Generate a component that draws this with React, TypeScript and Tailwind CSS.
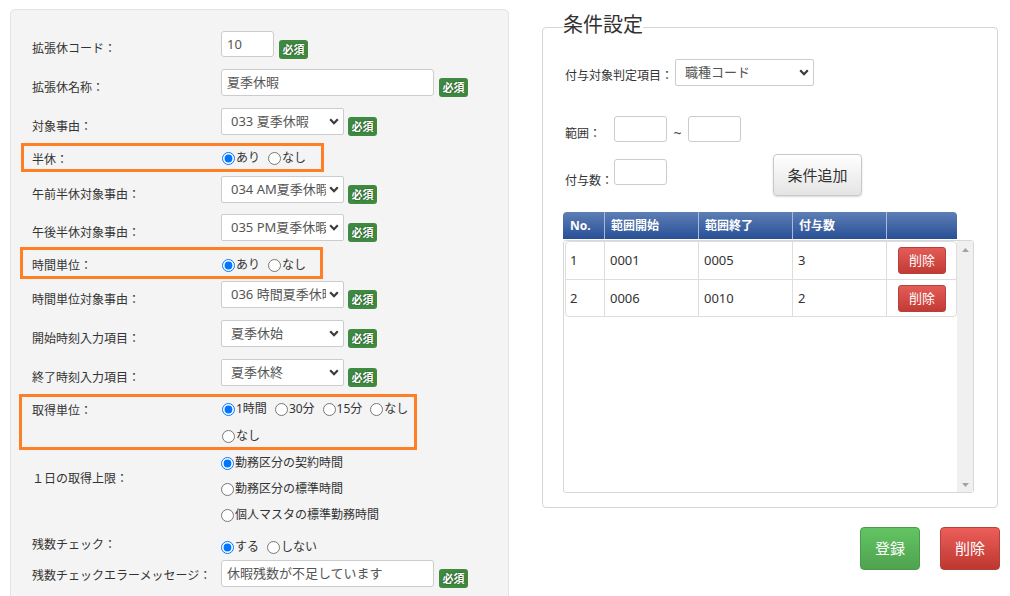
import React from "react";

const Chevron = () => (
  <svg width="10" height="7" viewBox="0 0 10 7" className="shrink-0">
    <path d="M1.2 1.3 L5 5.2 L8.8 1.3" stroke="#3a3a3a" strokeWidth="2.2" fill="none" />
  </svg>
);

const Badge = ({ cls }: { cls: string }) => (
  <div
    className={`${cls} w-[29px] h-[19px] shrink-0 rounded-[3px] bg-[#3f8a40] text-white text-[11px] font-bold leading-[19px] text-center [text-shadow:0_0_2px_#173d17]`}
  >
    必須
  </div>
);

const Select = ({ text, cls }: { text: string; cls: string }) => (
  <div
    className={`${cls} h-[27px] shrink-0 bg-white border border-[#cccccc] rounded-[2px] flex items-center pl-[9px] pr-[4px] text-[13px] text-[#555]`}
  >
    <span className="flex-1 mr-[3px] overflow-hidden whitespace-nowrap leading-[25px]">{text}</span>
    <Chevron />
  </div>
);

const TextInput = ({ value, cls }: { value?: string; cls: string }) => (
  <div
    className={`${cls} shrink-0 bg-white border border-[#cccccc] rounded-[3px] pl-[5px] text-[13px] text-[#555] leading-[24px] whitespace-nowrap overflow-hidden`}
  >
    {value}
  </div>
);

const Radio = ({ checked, label }: { checked?: boolean; label: string }) => (
  <label className="flex items-center text-[12px] text-[#333] leading-[18px] whitespace-nowrap">
    <input type="radio" checked={!!checked} readOnly className="m-0 w-[13px] h-[13px]" />
    <span className="ml-[1px]">{label}</span>
  </label>
);

const Label = ({ text, cls }: { text: string; cls: string }) => (
  <div className={`${cls} shrink-0 text-[12px] leading-[20px] text-[#333] whitespace-nowrap`}>{text}</div>
);

const SelectRow = ({ label, text, h }: { label: string; text: string; h: string }) => (
  <div className={`flex ml-[21px] ${h}`}>
    <Label text={label} cls="w-[189px] mt-[9px]" />
    <Select text={text} cls="w-[123px]" />
    <Badge cls="mt-[9px] ml-[4px]" />
  </div>
);

const DeleteSmall = () => (
  <div className="ml-[11px] mt-[5px] w-[48px] h-[27px] rounded-[3px] border border-[#b8403a] bg-linear-to-b from-[#e45c57] to-[#c23a34] text-white text-[13px] leading-[25px] text-center">
    削除
  </div>
);

const BodyRow = ({ no, a, b, c, first }: { no: string; a: string; b: string; c: string; first?: boolean }) => (
  <div className={`flex h-[37px] text-[13px] text-[#333] ${first ? "" : "border-t border-[#dddddd]"}`}>
    <div className="w-[39px] border-r border-[#dddddd] pl-[4px] leading-[36px]">{no}</div>
    <div className="w-[94px] border-r border-[#dddddd] pl-[5px] leading-[36px]">{a}</div>
    <div className="w-[94px] border-r border-[#dddddd] pl-[5px] leading-[36px]">{b}</div>
    <div className="w-[94px] border-r border-[#dddddd] pl-[5px] leading-[36px]">{c}</div>
    <div className="flex-1">
      <DeleteSmall />
    </div>
  </div>
);

export default function App() {
  return (
    <div className="w-[1010px] h-[596px] overflow-hidden bg-white flex items-start font-['Noto_Sans','Noto_Sans_CJK_JP',sans-serif]">
      {/* Left panel */}
      <div className="mt-[9px] ml-[10px] w-[499px] h-[600px] shrink-0 bg-[#f4f4f4] border border-[#e3e3e3] rounded-[5px] pt-[21px]">
        {/* R1 */}
        <div className="flex h-[38px] ml-[21px]">
          <Label text="拡張休コード：" cls="w-[189px] mt-[8px]" />
          <TextInput value="10" cls="w-[53px] h-[26px]" />
          <Badge cls="mt-[9px] ml-[5px]" />
        </div>
        {/* R2 */}
        <div className="flex h-[39px] ml-[21px]">
          <Label text="拡張休名称：" cls="w-[189px] mt-[9px]" />
          <TextInput value="夏季休暇" cls="w-[213px] h-[27px]" />
          <Badge cls="mt-[9px] ml-[5px]" />
        </div>
        <SelectRow label="対象事由：" text="033 夏季休暇" h="h-[35px]" />
        {/* R4 orange */}
        <div className="h-[33px]">
          <div className="ml-[10px] w-[303px] h-[29px] border-[3px] border-[#ff7f27] flex pl-[8px]">
            <Label text="半休：" cls="w-[190px] mt-[4px]" />
            <div className="flex gap-[8px] mt-[1px]">
              <Radio checked label="あり" />
              <Radio label="なし" />
            </div>
          </div>
        </div>
        <SelectRow label="午前半休対象事由：" text="034 AM夏季休暇" h="h-[38px]" />
        <SelectRow label="午後半休対象事由：" text="035 PM夏季休暇" h="h-[33px]" />
        {/* R7 orange */}
        <div className="h-[34px]">
          <div className="ml-[9px] w-[303px] h-[32px] border-[3px] border-[#ff7f27] flex pl-[9px]">
            <Label text="時間単位：" cls="w-[190px] mt-[6px]" />
            <div className="flex gap-[8px] mt-[4px]">
              <Radio checked label="あり" />
              <Radio label="なし" />
            </div>
          </div>
        </div>
        <SelectRow label="時間単位対象事由：" text="036 時間夏季休暇" h="h-[39px]" />
        <SelectRow label="開始時刻入力項目：" text="夏季休始" h="h-[39px]" />
        <SelectRow label="終了時刻入力項目：" text="夏季休終" h="h-[35px]" />
        {/* R11 orange */}
        <div className="h-[56px]">
          <div className="ml-[8px] w-[398px] h-[56px] border-[3px] border-[#ff7f27] flex pl-[10px]">
            <Label text="取得単位：" cls="w-[190px] mt-[4px]" />
            <div className="flex flex-col gap-[9px] mt-[3px]">
              <div className="flex gap-[8px]">
                <Radio checked label="1時間" />
                <Radio label="30分" />
                <Radio label="15分" />
                <Radio label="なし" />
              </div>
              <div className="flex">
                <Radio label="なし" />
              </div>
            </div>
          </div>
        </div>
        {/* R12 */}
        <div className="flex h-[80px] ml-[21px]">
          <Label text="１日の取得上限：" cls="w-[189px] mt-[19px]" />
          <div className="flex flex-col gap-[8px] mt-[4px]">
            <Radio checked label="勤務区分の契約時間" />
            <Radio label="勤務区分の標準時間" />
            <Radio label="個人マスタの標準勤務時間" />
          </div>
        </div>
        {/* R13 */}
        <div className="flex h-[30px] ml-[21px]">
          <Label text="残数チェック：" cls="w-[189px] mt-[5px]" />
          <div className="flex gap-[8px] mt-[4px]">
            <Radio checked label="する" />
            <Radio label="しない" />
          </div>
        </div>
        {/* R14 */}
        <div className="flex h-[38px] ml-[21px]">
          <Label text="残数チェックエラーメッセージ：" cls="w-[189px] mt-[6px]" />
          <TextInput value="休暇残数が不足しています" cls="w-[213px] h-[27px]" />
          <Badge cls="mt-[9px] ml-[5px]" />
        </div>
      </div>

      {/* Right column */}
      <div className="ml-[33px] mt-[27px] w-[458px] shrink-0">
        <div className="relative w-[456px] h-[481px] border border-[#d6d6d6] rounded-[4px] pt-[31px] pl-[20px]">
          <span className="absolute left-[20px] top-[-16px] bg-white text-[20px] leading-[26px] text-[#333]">
            条件設定
          </span>
          {/* Row A */}
          <div className="flex pl-[2px] h-[27px]">
            <Label text="付与対象判定項目：" cls="w-[110px] mt-[7px]" />
            <Select text="職種コード" cls="w-[139px]" />
          </div>
          {/* Row B */}
          <div className="flex pl-[2px] mt-[30px] h-[26px]">
            <Label text="範囲：" cls="w-[49px] mt-[8px]" />
            <TextInput cls="w-[53px] h-[26px]" />
            <div className="w-[21px] text-center text-[14px] leading-[18px] text-[#444] mt-[8px]">~</div>
            <TextInput cls="w-[53px] h-[26px]" />
          </div>
          {/* Row C */}
          <div className="flex pl-[2px] mt-[12px] h-[42px]">
            <Label text="付与数：" cls="w-[49px] mt-[17px]" />
            <TextInput cls="w-[53px] h-[26px] mt-[5px]" />
            <div className="ml-[106px] w-[89px] h-[42px] rounded-[4px] border border-[#c8c8c8] bg-linear-to-b from-white to-[#e4e4e4] shadow-[0_1px_2px_rgba(0,0,0,0.15)] text-[15px] text-[#333] leading-[40px] text-center">
              条件追加
            </div>
          </div>
          {/* Table */}
          <div className="mt-[16px]">
            <div className="flex w-[394px] h-[27px] rounded-t-[4px] bg-linear-to-b from-[#5e7fb5] to-[#284f96] text-white text-[12px] font-bold leading-[27px]">
              <div className="w-[42px] border-r border-[#a9b9d6] pl-[7px]">No.</div>
              <div className="w-[94px] border-r border-[#a9b9d6] pl-[6px]">範囲開始</div>
              <div className="w-[94px] border-r border-[#a9b9d6] pl-[6px]">範囲終了</div>
              <div className="w-[94px] border-r border-[#a9b9d6] pl-[6px]">付与数</div>
              <div className="flex-1" />
            </div>
            <div className="mt-[1px] w-[411px] h-[253px] border border-[#d8d8d8] rounded-[3px] flex">
              <div className="w-[393px]">
                <div className="ml-[1px] w-[392px] border border-[#dddddd] rounded-[4px]">
                  <BodyRow first no="1" a="0001" b="0005" c="3" />
                  <BodyRow no="2" a="0006" b="0010" c="2" />
                </div>
              </div>
              <div className="w-[16px] bg-[#f0f0f0] flex flex-col justify-between items-center pt-[7px] pb-[5px]">
                <svg width="7" height="4" viewBox="0 0 7 4">
                  <path d="M0 4 L3.5 0 L7 4 Z" fill="#a3a3a3" />
                </svg>
                <svg width="7" height="4" viewBox="0 0 7 4">
                  <path d="M0 0 L3.5 4 L7 0 Z" fill="#a3a3a3" />
                </svg>
              </div>
            </div>
          </div>
        </div>
        {/* Bottom buttons */}
        <div className="flex justify-end gap-[20px] mt-[19px]">
          <div className="w-[60px] h-[43px] rounded-[4px] border border-[#4a9a4a] bg-linear-to-b from-[#63c463] to-[#4fa34f] text-white text-[15px] leading-[41px] text-center">
            登録
          </div>
          <div className="w-[60px] h-[43px] rounded-[4px] border border-[#b8403a] bg-linear-to-b from-[#ec5e5a] to-[#bd372f] text-white text-[15px] leading-[41px] text-center">
            削除
          </div>
        </div>
      </div>
    </div>
  );
}
